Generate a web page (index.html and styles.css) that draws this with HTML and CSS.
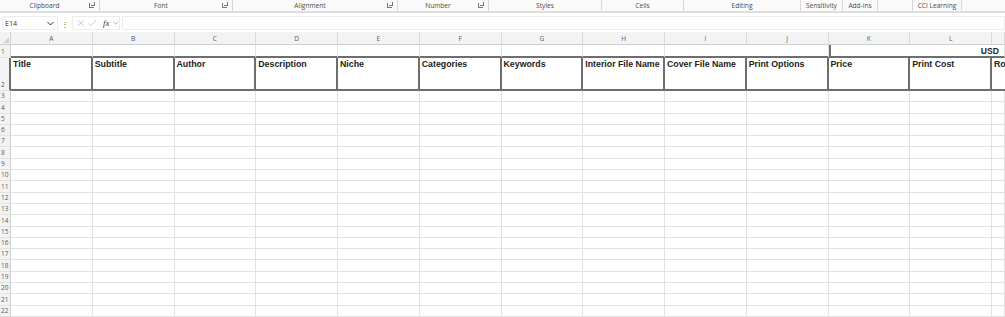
FILE: index.html
```html
<!DOCTYPE html>
<html lang="en">

<head>
    <meta charset="UTF-8">
    <meta name="viewport" content="width=device-width, initial-scale=1.0">
    <title>Book Listing Sheet</title>
    <link rel="stylesheet" href="styles.css">
</head>

<body>
    <div class="ribbon">
        <div class="group g-clip"><span class="label">Clipboard</span><span class="launcher"></span></div>
        <div class="group g-font"><span class="label">Font</span><span class="launcher"></span></div>
        <div class="group g-align"><span class="label">Alignment</span><span class="launcher"></span></div>
        <div class="group g-num"><span class="label">Number</span><span class="launcher"></span></div>
        <div class="group g-styles"><span class="label">Styles</span></div>
        <div class="group g-cells"><span class="label">Cells</span></div>
        <div class="group g-edit"><span class="label">Editing</span></div>
        <div class="group g-sens"><span class="label">Sensitivity</span></div>
        <div class="group g-addins"><span class="label">Add-ins</span></div>
        <div class="group g-empty"></div>
        <div class="group g-cci"><span class="label">CCI Learning</span></div>
    </div>

    <div class="formula-bar">
        <div class="name-box">
            <span>E14</span>
            <svg class="chev" width="7" height="5" viewBox="0 0 7 5"><path d="M0.5 1 L3.5 4 L6.5 1" fill="none" stroke="#333" stroke-width="1"/></svg>
        </div>
        <div class="more">&#8942;</div>
        <div class="fx-box">
            <svg width="8" height="8" viewBox="0 0 8 8"><path d="M1 1 L7 7 M7 1 L1 7" stroke="#bdbdbd" stroke-width="0.9"/></svg>
            <svg width="9" height="8" viewBox="0 0 9 8"><path d="M0.5 4.5 L3 7 L8.5 0.8" fill="none" stroke="#bdbdbd" stroke-width="0.9"/></svg>
            <span class="fx">fx</span>
            <svg width="6" height="4" viewBox="0 0 6 4"><path d="M0.5 0.8 L3 3.2 L5.5 0.8" fill="none" stroke="#999" stroke-width="0.8"/></svg>
        </div>
        <div class="formula-input"></div>
    </div>

    <div class="sheet">
        <div class="corner"><svg width="6" height="6" viewBox="0 0 6 6"><path d="M6 0 L6 6 L0 6 Z" fill="#d2d2d2"/></svg></div>
        <div class="col-head">A</div>
        <div class="col-head">B</div>
        <div class="col-head">C</div>
        <div class="col-head">D</div>
        <div class="col-head">E</div>
        <div class="col-head">F</div>
        <div class="col-head">G</div>
        <div class="col-head">H</div>
        <div class="col-head">I</div>
        <div class="col-head">J</div>
        <div class="col-head">K</div>
        <div class="col-head">L</div>
        <div class="col-head"></div>

        <div class="row-head">1</div>
        <div class="cell top"></div>
        <div class="cell top"></div>
        <div class="cell top"></div>
        <div class="cell top"></div>
        <div class="cell top"></div>
        <div class="cell top"></div>
        <div class="cell top"></div>
        <div class="cell top"></div>
        <div class="cell top"></div>
        <div class="cell top"></div>
        <div class="cell top merged">USD</div>

        <div class="row-head tall">2</div>
        <div class="cell head">Title</div>
        <div class="cell head">Subtitle</div>
        <div class="cell head">Author</div>
        <div class="cell head">Description</div>
        <div class="cell head">Niche</div>
        <div class="cell head">Categories</div>
        <div class="cell head">Keywords</div>
        <div class="cell head">Interior File Name</div>
        <div class="cell head">Cover File Name</div>
        <div class="cell head">Print Options</div>
        <div class="cell head">Price</div>
        <div class="cell head">Print Cost</div>
        <div class="cell head last">Ro</div>
    </div>

    <script>
        let sheet = document.querySelector('.sheet');
        // empty rows 3 - 22
        for (let r = 3; r <= 22; r++) {
            sheet.innerHTML += `<div class="row-head">${r}</div>`;
            for (let c = 0; c < 13; c++) {
                sheet.innerHTML += `<div class="cell"></div>`;
            }
        }
    </script>
</body>

</html>
```

FILE: styles.css
```css
* {
    box-sizing: border-box;
}

body {
    margin: 0;
    width: 1005px;
    height: 317px;
    overflow: hidden;
    background: #ffffff;
    font-family: "Open Sans", "Noto Sans", sans-serif;
    color: #444;
}

/* ribbon group labels */
.ribbon {
    height: 13px;
    display: flex;
    background: #fafafa;
    border-bottom: 2px solid #dedede;
}

.group {
    height: 11px;
    display: flex;
    align-items: center;
    border-right: 1px solid #d9d9d9;
    font-size: 6.6px;
    color: #4a4a4a;
    flex-shrink: 0;
}

.group .label {
    flex: 1;
    text-align: center;
    white-space: nowrap;
}

.launcher {
    width: 5px;
    height: 5px;
    margin-right: 5px;
    border-left: 1px solid #777;
    border-bottom: 1px solid #777;
    position: relative;
}

.launcher::after {
    content: "";
    position: absolute;
    left: 1px;
    bottom: 1px;
    width: 3px;
    height: 3px;
    border-right: 1px solid #777;
    border-bottom: 1px solid #777;
}

.g-clip { width: 100px; }
.g-font { width: 133px; }
.g-align { width: 165px; }
.g-num { width: 91px; }
.g-styles { width: 113px; }
.g-cells { width: 82px; }
.g-edit { width: 117px; }
.g-sens { width: 42px; }
.g-addins { width: 35px; }
.g-empty { width: 35px; }
.g-cci { width: 49px; }

/* formula bar */
.formula-bar {
    height: 19px;
    display: flex;
    align-items: center;
    padding: 2px 0 1px 2px;
    gap: 2px;
}

.name-box {
    width: 56px;
    height: 14px;
    display: flex;
    align-items: center;
    justify-content: space-between;
    padding: 0 3px 0 2px;
    font-size: 7.2px;
    color: #333;
    border: 1px solid #ececec;
}

.more {
    width: 10px;
    text-align: center;
    font-size: 8px;
    color: #555;
}

.fx-box {
    width: 48px;
    height: 14px;
    display: flex;
    align-items: center;
    gap: 4px;
    padding-left: 4px;
    border: 1px solid #ececec;
}

.fx {
    font-family: "Liberation Serif", serif;
    font-style: italic;
    font-size: 9px;
    color: #333;
    margin-left: 2px;
}

.formula-input {
    flex: 1;
    height: 14px;
    border: 1px solid #ececec;
}

/* grid */
.sheet {
    display: grid;
    grid-template-columns: 11px repeat(12, 81.75px) 1fr;
    grid-template-rows: 13px 13px 33px repeat(20, 11.3px);
    font-size: 6.6px;
}

.corner {
    background: #f3f3f3;
    border-right: 1px solid #d0d0d0;
    border-bottom: 1px solid #d0d0d0;
    display: flex;
    align-items: flex-end;
    justify-content: flex-end;
    padding: 0 1px 1px 0;
}

.col-head {
    background: #f3f3f3;
    border-right: 1px solid #dadada;
    border-bottom: 1px solid #cfcfcf;
    display: flex;
    align-items: center;
    justify-content: center;
    color: #5c5c5c;
}

.row-head {
    background: #f3f3f3;
    border-right: 1px solid #cfcfcf;
    border-bottom: 1px solid #e2e2e2;
    display: flex;
    align-items: flex-end;
    padding: 0 0 0 1px;
    color: #5c5c5c;
    line-height: 10px;
}

.row-head.tall {
    border-right: 2px solid #6e6e6e;
}

.cell {
    border-right: 1px solid #e2e2e2;
    border-bottom: 1px solid #e2e2e2;
    overflow: hidden;
    white-space: nowrap;
}

.cell.top {
    border-bottom: 2px solid #6e6e6e;
}

.cell.top:nth-child(24) {
    border-right: none;
}

.cell.merged {
    grid-column: 12 / -1;
    border-left: 2px solid #6e6e6e;
    display: flex;
    align-items: flex-end;
    justify-content: flex-end;
    padding-right: 5px;
    font-family: "Liberation Sans", Arial, sans-serif;
    font-weight: bold;
    font-size: 8.6px;
    color: #222;
    line-height: 10px;
}

.cell.head {
    border-right: 2px solid #6e6e6e;
    border-bottom: 2px solid #6e6e6e;
    padding: 1px 2px;
    font-family: "Liberation Sans", Arial, sans-serif;
    font-weight: bold;
    font-size: 8.8px;
    color: #222;
    line-height: 10px;
}

.cell.head.last {
    border-right: none;
}
```
